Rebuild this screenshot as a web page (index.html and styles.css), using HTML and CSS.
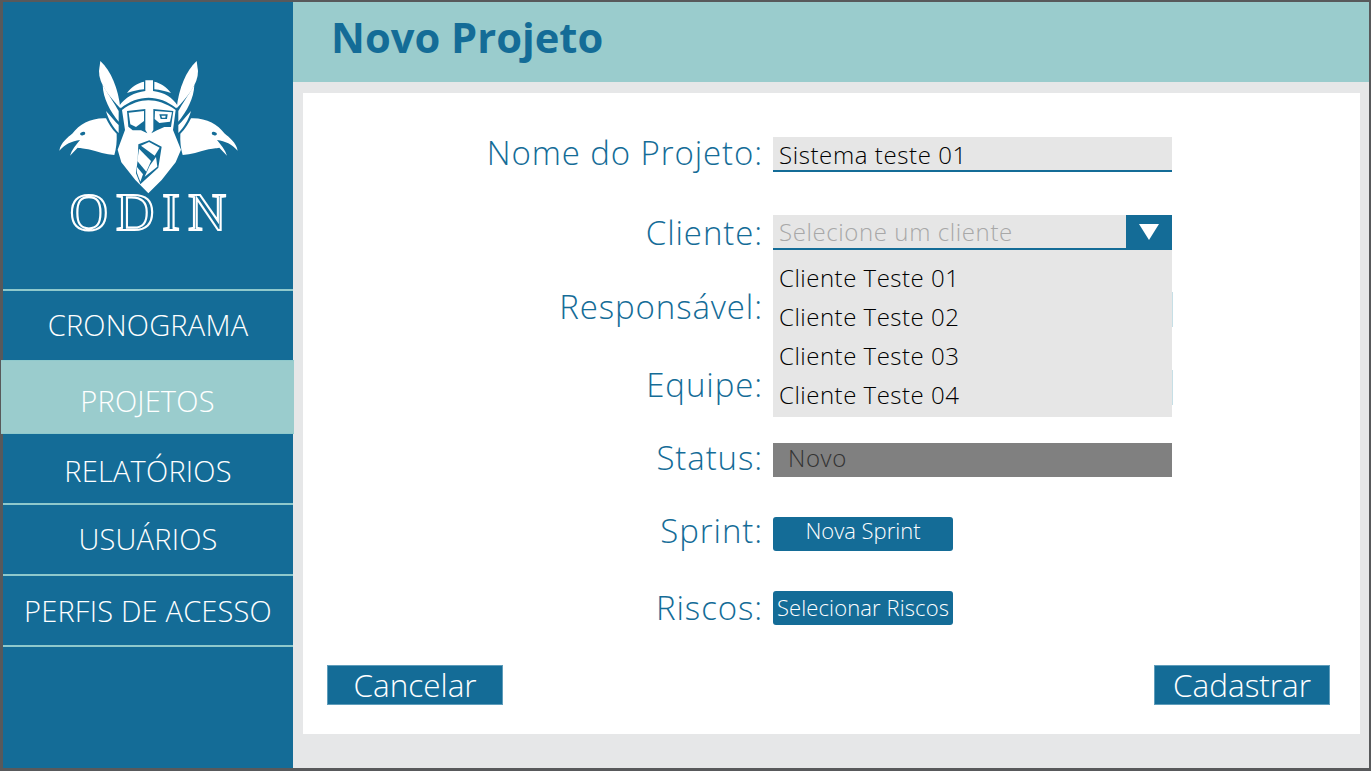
FILE: index.html
```html
<!DOCTYPE html>
<html lang="pt">
<head>
<meta charset="utf-8">
<title>Novo Projeto</title>
<link rel="stylesheet" href="styles.css">
</head>
<body>
<div class="app">
  <aside class="sidebar">
    <div class="brand">
      <svg class="logo" viewBox="0 0 585 417" aria-hidden="true">
        <g fill="#fff">
          <path d="M148 18C180 48 202 100 208 160C178 128 143 88 144 48Z"/>
          <path d="M155 90C176 125 190 145 203 168V200C178 170 156 130 155 90Z"/>
          <path d="M165 168C180 185 192 200 203 210V234C188 220 172 195 165 168Z"/>
          <path d="M437 18C405 48 383 100 377 160C407 128 442 88 441 48Z"/>
          <path d="M430 90C409 125 395 145 382 168V200C407 170 429 130 430 90Z"/>
          <path d="M420 168C405 185 393 200 382 210V234C397 220 413 195 420 168Z"/>
          <path d="M25 287C30 262 50 248 65 235C85 208 120 188 165 190C172 205 182 222 197 236C198 258 196 280 190 300C165 298 140 290 118 284C100 280 90 280 80 278L57 302C62 285 75 270 87 255C62 258 42 268 25 287Z"/>
          <path d="M560 287C555 262 535 248 520 235C500 208 465 188 420 190C413 205 403 222 388 236C387 258 389 280 395 300C420 298 445 290 467 284C485 280 495 280 505 278L528 302C523 285 510 270 498 255C523 258 543 268 560 287Z"/>
          <path d="M283 76H306V108C340 112 365 128 380 152L376 160C350 138 320 128 293 128C265 128 235 138 209 160L205 152C222 128 250 112 283 108Z"/>
          <path d="M228 114C242 94 260 84 279 80V103C260 105 243 109 228 114Z"/>
          <path d="M360 114C346 94 328 84 310 80V103C328 105 345 109 360 114Z"/>
          <path d="M213 165C240 145 268 136 292 136C318 136 345 145 374 165L366 225L390 284L374 322L332 375L292 415L253 375L211 322L200 284L222 225Z"/>
        </g>
        <g fill="#146c97">
          <ellipse cx="95" cy="236" rx="8" ry="5" transform="rotate(-15 95 236)"/>
          <ellipse cx="490" cy="236" rx="8" ry="5" transform="rotate(15 490 236)"/>
          <path d="M228 168L283 162V225L289 235L270 226H245L232 215Z"/>
          <path d="M307 162L367 168L360 216H340L318 226L301 235L307 225Z"/>
          <path d="M262 268L295 256L332 275L322 338L268 388L255 355L260 315Z"/>
        </g>
        <g fill="#fff">
          <path d="M233 173L279 168V198L255 216L238 208Z"/>
          <path d="M312 168L363 172L357 200L325 204L311 192Z"/>
          <path d="M270 272L294 261L326 278L311 302Z"/>
          <path d="M264 281L300 318L286 350L259 318Z"/>
          <path d="M315 306L319 335L281 365L296 332Z"/>
          <path d="M258 336L276 358L268 380L258 354Z"/>
        </g>
        <path d="M325 178H350L348 192H329Z" fill="#146c97"/>
        <path d="M331 182H344L343 188H333Z" fill="#fff"/>
      </svg>
      <div class="wordmark">ODIN</div>
    </div>
    <nav class="nav">
      <a class="nav-item up">CRONOGRAMA</a>
      <a class="nav-item active">PROJETOS</a>
      <a class="nav-item after-active">RELATÓRIOS</a>
      <a class="nav-item up">USUÁRIOS</a>
      <a class="nav-item last">PERFIS DE ACESSO</a>
    </nav>
  </aside>
  <main class="main">
    <header class="topbar"><h1>Novo Projeto</h1></header>
    <section class="card">
      <form class="form">
        <div class="row r-nome"><label>Nome do Projeto:</label><div class="input">Sistema teste 01</div></div>
        <div class="row r-cliente"><label>Cliente:</label>
          <div class="select-wrap">
            <div class="input placeholder">Selecione um cliente<span class="caret"><svg viewBox="0 0 20 16" width="20" height="16"><path d="M0 0H20L10 16Z" fill="#fff"/></svg></span></div>
            <ul class="dropdown">
              <li>Cliente Teste 01</li>
              <li>Cliente Teste 02</li>
              <li>Cliente Teste 03</li>
              <li>Cliente Teste 04</li>
            </ul>
          </div>
        </div>
        <div class="row r-resp"><label>Responsável:</label><div class="input ghost"></div></div>
        <div class="row r-equipe"><label>Equipe:</label><div class="input ghost"></div></div>
        <div class="row r-status"><label>Status:</label><div class="status">Novo</div></div>
        <div class="row r-sprint"><label>Sprint:</label><button type="button" class="mini">Nova Sprint</button></div>
        <div class="row r-riscos"><label>Riscos:</label><button type="button" class="mini tight">Selecionar Riscos</button></div>
      </form>
      <div class="actions">
        <button type="button" class="action">Cancelar</button>
        <button type="button" class="action">Cadastrar</button>
      </div>
    </section>
  </main>
</div>
</body>
</html>
```
FILE: styles.css
```css
* { box-sizing: border-box; }
html, body { margin: 0; padding: 0; }
body {
  width: 1371px;
  height: 771px;
  overflow: hidden;
  background: #fff;
  font-family: "Open Sans", "Noto Sans", sans-serif;
  font-weight: 300;
}
.app {
  display: flex;
  width: 1371px;
  height: 771px;
  border: 2px solid #58595b;
  border-width: 2px 2px 3px 3px;
  background: #e6e7e8;
}
.sidebar {
  width: 290px;
  flex: none;
  background: #146c97;
  display: flex;
  flex-direction: column;
}
.brand {
  height: 287px;
  display: flex;
  flex-direction: column;
  align-items: center;
  padding-top: 53px;
}
.logo { width: 195px; height: 139px; display: block; flex: none; }
.wordmark {
  font-family: "Liberation Serif", serif;
  font-size: 53px;
  line-height: 44px;
  letter-spacing: 8px;
  padding-left: 8px;
  color: transparent;
  -webkit-text-stroke: 2.1px #fff;
  margin-top: -4px;
}
.nav { display: flex; flex-direction: column; }
.nav-item {
  display: flex;
  align-items: center;
  justify-content: center;
  color: #fff;
  font-size: 29px;
  letter-spacing: 0.2px;
  height: 71px;
  border-top: 2px solid #8fc9cc;
}
.nav-item.up { padding-bottom: 2px; }
.nav-item.active {
  background: #9acccd;
  height: 74px;
  margin-left: -2px;
  margin-right: -1px;
  padding-top: 7px;
  border-top: 1px solid #8fc9cc;
  border-bottom: 1px solid #8fc9cc;
}
.nav-item.after-active { border-top: 0; height: 69px; padding-top: 4px; }
.nav-item.last { border-bottom: 2px solid #8fc9cc; height: 73px; }
.main { flex: 1; display: flex; flex-direction: column; min-width: 0; }
.topbar {
  height: 80px;
  background: #9acccd;
  padding: 0 0 10px 38px;
  display: flex;
  align-items: center;
}
.topbar h1 {
  margin: 0;
  color: #146c97;
  font-size: 41.7px;
  font-weight: 700;
  line-height: 1;
}
.card {
  margin: 11px 9px 34px 10px;
  flex: 1;
  background: #fff;
  padding: 44px 30px 29px 24px;
  display: flex;
  flex-direction: column;
  justify-content: space-between;
}
.form { display: flex; flex-direction: column; }
.row {
  display: grid;
  grid-template-columns: 436px 399px;
  column-gap: 10px;
  align-items: center;
  color: #146c97;
}
.row label {
  font-size: 33px;
  letter-spacing: 0.9px;
  text-align: right;
  height: 35px;
  line-height: 30px;
  white-space: nowrap;
}
.row.r-nome label, .row.r-status label { line-height: 32px; }
.row.r-cliente label, .row.r-riscos label { line-height: 35px; }
.r-cliente { margin-top: 43px; position: relative; z-index: 2; }
.r-resp { margin-top: 42px; }
.r-equipe { margin-top: 43px; }
.r-status { margin-top: 37px; }
.r-sprint { margin-top: 39px; }
.r-riscos { margin-top: 39px; }
.input {
  height: 35px;
  background: #e6e6e6;
  border-bottom: 2px solid #146c97;
  color: #000;
  font-size: 24px;
  letter-spacing: 0.6px;
  padding-left: 6px;
  line-height: 36px;
  position: relative;
}
.input.ghost { background: #fff; border-bottom: 0; box-shadow: 1px 0 0 #c6dfe6; }
.input.placeholder { color: #a8a8a8; line-height: 34px; }
.select-wrap { position: relative; height: 35px; }
.caret {
  position: absolute;
  right: 0;
  top: 0;
  width: 46px;
  height: 33px;
  background: #146c97;
  display: flex;
  align-items: center;
  justify-content: center;
}
.dropdown {
  position: absolute;
  left: 0;
  right: 0;
  top: 35px;
  height: 167px;
  margin: 0;
  padding: 8px 0 0 6px;
  list-style: none;
  background: #e6e6e6;
  color: #000;
  font-size: 24px;
  letter-spacing: 0.5px;
}
.dropdown li { height: 39px; line-height: 39px; }
.status {
  height: 34px;
  background: #808080;
  color: #333;
  font-size: 24px;
  letter-spacing: 0.6px;
  line-height: 29px;
  padding-left: 15px;
}
.mini {
  width: 180px;
  height: 34px;
  background: #146c97;
  color: #fff;
  border: 0;
  border-radius: 3px;
  font: 300 22px/26px "Open Sans", "Noto Sans", sans-serif;
  padding: 0 0 8px;
}
.mini.tight { letter-spacing: 0.1px; white-space: nowrap; padding: 0 0 2px; }
.actions { display: flex; justify-content: space-between; }
.action {
  width: 176px;
  height: 40px;
  background: #146c97;
  color: #fff;
  border: 1px solid #5f9dbb;
  font: 300 31.5px/36px "Open Sans", "Noto Sans", sans-serif;
  padding: 0;
}
```
